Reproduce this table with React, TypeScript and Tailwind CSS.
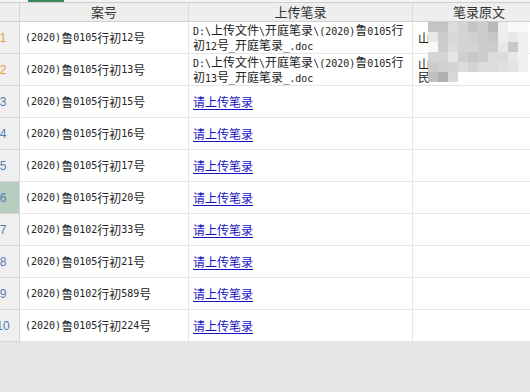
import React from "react";

type Row = {
  n: number;
  caseNo: string;
  file?: [string, string];
  original?: [string, string?];
};

const rows: Row[] = [
  {
    n: 1,
    caseNo: "(2020)鲁0105行初12号",
    file: ["D:\\上传文件\\开庭笔录\\(2020)鲁0105行", "初12号_开庭笔录_.doc"],
    original: ["山"],
  },
  {
    n: 2,
    caseNo: "(2020)鲁0105行初13号",
    file: ["D:\\上传文件\\开庭笔录\\(2020)鲁0105行", "初13号_开庭笔录_.doc"],
    original: ["山", "民"],
  },
  { n: 3, caseNo: "(2020)鲁0105行初15号" },
  { n: 4, caseNo: "(2020)鲁0105行初16号" },
  { n: 5, caseNo: "(2020)鲁0105行初17号" },
  { n: 6, caseNo: "(2020)鲁0105行初20号" },
  { n: 7, caseNo: "(2020)鲁0102行初33号" },
  { n: 8, caseNo: "(2020)鲁0105行初21号" },
  { n: 9, caseNo: "(2020)鲁0102行初589号" },
  { n: 10, caseNo: "(2020)鲁0105行初224号" },
];

// pixelated blur over the 笔录原文 column
const mosaic: string[][] = [
  ["#c4c4c4", "#c4c4c4", "#dcdcdc", "#d4d4d4", "#c4c4c4", "#cccccc", "#b8b8b8", "#eeeeee", "#f8f8f8", "#f8f8f8"],
  ["#e8e8e8", "#cccccc", "#d8d8d8", "#d4d4d4", "#d0d0d0", "#cccccc", "#c8c8c8", "#eeeeee", "#e8e8e8", "#f0f0f0"],
  ["#f8f8f8", "#cccccc", "#dcdcdc", "#d4d4d4", "#d4d4d4", "#cccccc", "#cccccc", "#e8e8e8", "#c8c8c8", "#eeeeee"],
  ["#d4d4d4", "#d4d4d4", "#e4e4e4", "#d0d0d0", "#c8c8c8", "#cccccc", "#dcdcdc", "#dcdcdc", "#e8e8e8", "#f0f0f0"],
  ["#cccccc", "#d0d0d0", "#d4d4d4", "#dcdcdc", "#d4d4d4", "#dcdcdc", "#dcdcdc", "#e0e0e0", "#e4e4e4", "#f0f0f0"],
  ["#c0c0c0", "#b0b0b0", "#d8d8d8"],
];

function Mixed({ text }: { text: string }) {
  return (
    <>
      {text.split(/([\x00-\x7f]+)/).map((s, i) =>
        /^[\x00-\x7f]+$/.test(s) ? (
          <span key={i} className="font-['DejaVu_Sans_Mono'] text-[10px]">
            {s}
          </span>
        ) : (
          <span key={i}>{s}</span>
        )
      )}
    </>
  );
}

export default function App() {
  return (
    <div className="w-[530px] h-[392px] overflow-hidden bg-[#e5e6e8] font-['Noto_Sans_CJK_SC',sans-serif] text-[12px] text-[#222]">
      <div className="relative w-[545px]">
        {/* tab strip */}
        <div className="flex h-[2px] bg-[#f3f3f3]">
          <div className="w-[28px]" />
          <div className="w-[36px] bg-[#3a8657]" />
        </div>

        {/* column headers */}
        <div className="flex h-[20px] border-t border-b border-[#cfcfcf] bg-[#eeeeee] text-[13px] text-[#333]">
          <div className="w-[20px] border-r border-[#d6d6d6]" />
          <div className="flex w-[169px] items-center justify-center border-r border-[#dadada]">案号</div>
          <div className="flex w-[224px] items-center justify-center border-r border-[#dadada]">上传笔录</div>
          <div className="flex w-[132px] items-center justify-center">笔录原文</div>
        </div>

        {/* body */}
        {rows.map((r) => (
          <div key={r.n} className="flex h-[32px] bg-white">
            <div
              className={
                "w-[20px] overflow-hidden border-r border-b border-[#d6d6d6] " +
                (r.n === 6 ? "bg-[#b6cdbf]" : "bg-[#efefef]")
              }
            >
              <div
                className={
                  "ml-[-12px] flex h-full w-[30px] items-center justify-center font-['Liberation_Sans'] text-[12px] " +
                  (r.n <= 2 ? "text-[#e5a033]" : "text-[#4f7fae]")
                }
              >
                {r.n}
              </div>
            </div>
            <div className="flex w-[169px] items-center border-r border-b border-[#e6e6e6] pl-[5px] whitespace-nowrap">
              <Mixed text={r.caseNo} />
            </div>
            <div className="flex w-[224px] items-center border-r border-b border-[#e6e6e6] pl-[4px] whitespace-nowrap">
              {r.file ? (
                <div className="flex flex-col leading-[13px]">
                  <div><Mixed text={r.file[0]} /></div>
                  <div><Mixed text={r.file[1]} /></div>
                </div>
              ) : (
                <span className="text-[#1414c4] underline underline-offset-2">请上传笔录</span>
              )}
            </div>
            <div className="flex w-[132px] items-center border-b border-[#e6e6e6] pl-[5px]">
              {r.original && (
                <div className="flex flex-col leading-[13px]">
                  {r.original.map((t, i) => (
                    <div key={i}>{t}</div>
                  ))}
                </div>
              )}
            </div>
          </div>
        ))}

        {/* mosaic overlay */}
        <div className="absolute left-[428px] top-[22px] flex flex-col">
          {mosaic.map((row, i) => (
            <div key={i} className="flex">
              {row.map((c, j) => (
                <div key={j} className="h-[10px] w-[10px]" style={{ background: c }} />
              ))}
            </div>
          ))}
        </div>
      </div>
    </div>
  );
}
